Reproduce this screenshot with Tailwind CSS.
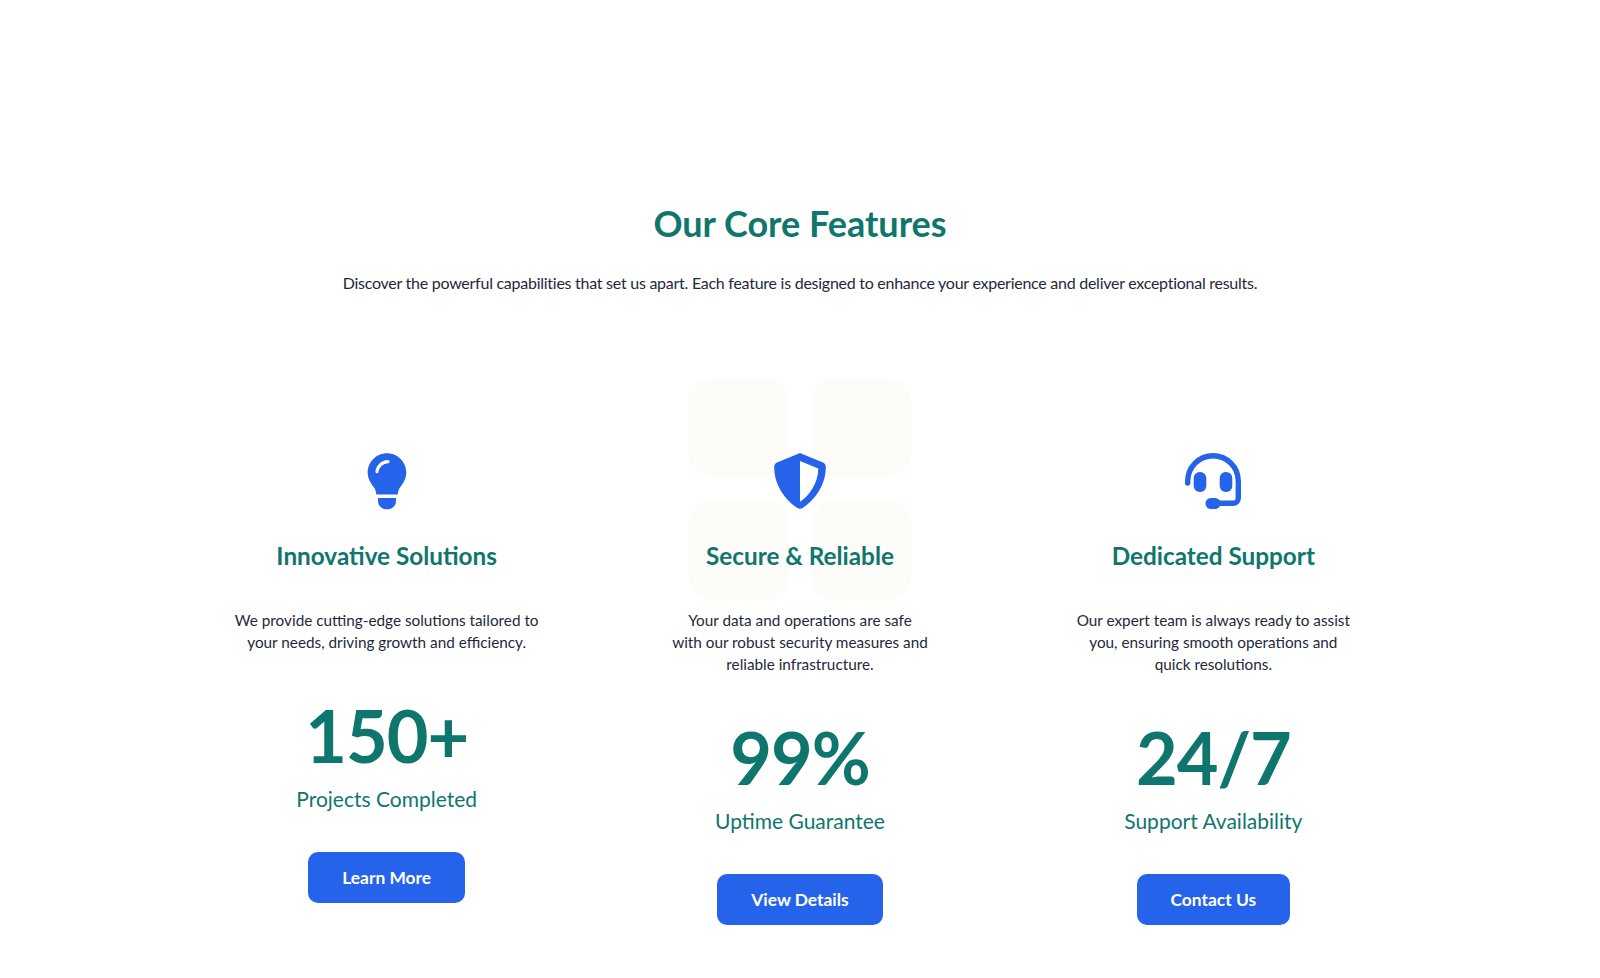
<!DOCTYPE html>
<html lang="en">
<head>
    <meta charset="UTF-8">
    <meta name="viewport" content="width=device-width, initial-scale=1.0">
    <title>Our Core Features</title>
    <script src="https://cdn.jsdelivr.net/npm/@tailwindcss/browser@4"></script>
</head>
<body class="bg-white font-['Lato',sans-serif] text-[#1e293b]">
    <main class="mx-auto w-[1216px] pt-[203px]">
        <!-- Heading -->
        <header class="text-center">
            <h1 class="text-4xl font-bold text-[#0f766e]">Our Core Features</h1>
            <p class="mt-7 text-base tracking-[-0.26px]">Discover the powerful capabilities that set us apart. Each feature is designed to enhance your experience and deliver exceptional results.</p>
        </header>

        <!-- Feature columns -->
        <section class="mt-[154px] grid grid-cols-3 gap-6 text-center">
            <article class="flex flex-col items-center">
                <svg class="h-16 w-16" viewBox="0 0 64 64" fill="#2563eb">
                    <path d="M32 4.3C21.4 4.3 12.7 13 12.7 23.6C12.7 30 15.8 34.5 19 38.5C20.5 40.5 21 42.5 21.3 45.5H42.7C43 42.5 43.5 40.5 45 38.5C48.2 34.5 51.3 30 51.3 23.6C51.3 13 42.6 4.3 32 4.3Z"/>
                    <path d="M23 49H41V52C41 57 37 60.3 32 60.3C27 60.3 23 57 23 52Z"/>
                    <path d="M22 22.7C22.3 17.5 27 13 33 12.7" fill="none" stroke="#fff" stroke-width="3.2" stroke-linecap="round"/>
                </svg>
                <h2 class="mt-[27px] text-[24.3px] font-bold leading-8 text-[#0f766e]">Innovative Solutions</h2>
                <p class="mt-[37px] text-[15.3px] leading-[22px]">We provide cutting-edge solutions tailored to<br>your needs, driving growth and efficiency.</p>
                <div class="mt-[46px] text-7xl font-bold leading-[72px] tracking-[-1px] text-[#0f766e]">150+</div>
                <div class="mt-[14px] text-[21px] leading-7 text-[#0f766e]">Projects Completed</div>
                <a href="#" class="mt-[39px] rounded-[10px] bg-[#2563eb] px-[34px] py-[13.5px] text-[17.4px] leading-6 font-bold text-white">Learn More</a>
            </article>

            <article class="relative flex flex-col items-center">
                <!-- Faint squares behind the icon -->
                <div class="absolute left-1/2 top-[-71px] grid -translate-x-1/2 grid-cols-[100px_100px] gap-[22px]">
                    <div class="h-[100px] rounded-3xl bg-[#fdfcf8]"></div>
                    <div class="h-[100px] rounded-3xl bg-[#fdfcf8]"></div>
                    <div class="h-[100px] rounded-3xl bg-[#fdfcf8]"></div>
                    <div class="h-[100px] rounded-3xl bg-[#fdfcf8]"></div>
                </div>
                <svg class="relative h-16 w-16" viewBox="0 0 64 64" fill="#2563eb">
                    <path d="M30.4 4.7C31.4 4.2 32.6 4.2 33.6 4.7L54.5 13.2C56.5 14 57.8 15.6 57.8 18C57.8 36 47 51 34.5 59C33 60 31 60 29.5 59C17 51 6.2 36 6.2 18C6.2 15.6 7.5 14 9.5 13.2Z"/>
                    <path d="M32 12L50.3 19.4C50.3 33 42 46 32 52.7Z" fill="#fff"/>
                </svg>
                <h2 class="relative mt-[27px] text-[24.3px] font-bold leading-8 text-[#0f766e]">Secure &amp; Reliable</h2>
                <p class="relative mt-[37px] text-[15.3px] leading-[22px]">Your data and operations are safe<br>with our robust security measures and<br>reliable infrastructure.</p>
                <div class="mt-[46px] text-7xl font-bold leading-[72px] tracking-[-1px] text-[#0f766e]">99%</div>
                <div class="mt-[14px] text-[21px] leading-7 text-[#0f766e]">Uptime Guarantee</div>
                <a href="#" class="mt-[39px] rounded-[10px] bg-[#2563eb] px-[34px] py-[13.5px] text-[17.4px] leading-6 font-bold text-white">View Details</a>
            </article>

            <article class="flex flex-col items-center">
                <svg class="h-16 w-16" viewBox="0 0 64 64" fill="#2563eb">
                    <path d="M6.7 34V32A25.3 25.3 0 0 1 57.3 32V49A5.3 5.3 0 0 1 52 54.3H36" fill="none" stroke="#2563eb" stroke-width="5.4" stroke-linecap="round"/>
                    <rect x="24.5" y="49" width="15" height="11" rx="5.5"/>
                    <rect x="12.7" y="23" width="12.6" height="20" rx="6"/>
                    <rect x="38.7" y="23" width="12.6" height="20" rx="6"/>
                </svg>
                <h2 class="mt-[27px] text-[24.3px] font-bold leading-8 text-[#0f766e]">Dedicated Support</h2>
                <p class="mt-[37px] text-[15.3px] leading-[22px]">Our expert team is always ready to assist<br>you, ensuring smooth operations and<br>quick resolutions.</p>
                <div class="mt-[46px] text-7xl font-bold leading-[72px] tracking-[-1px] text-[#0f766e]">24/7</div>
                <div class="mt-[14px] text-[21px] leading-7 text-[#0f766e]">Support Availability</div>
                <a href="#" class="mt-[39px] rounded-[10px] bg-[#2563eb] px-[34px] py-[13.5px] text-[17.4px] leading-6 font-bold text-white">Contact Us</a>
            </article>
        </section>
    </main>
</body>
</html>
